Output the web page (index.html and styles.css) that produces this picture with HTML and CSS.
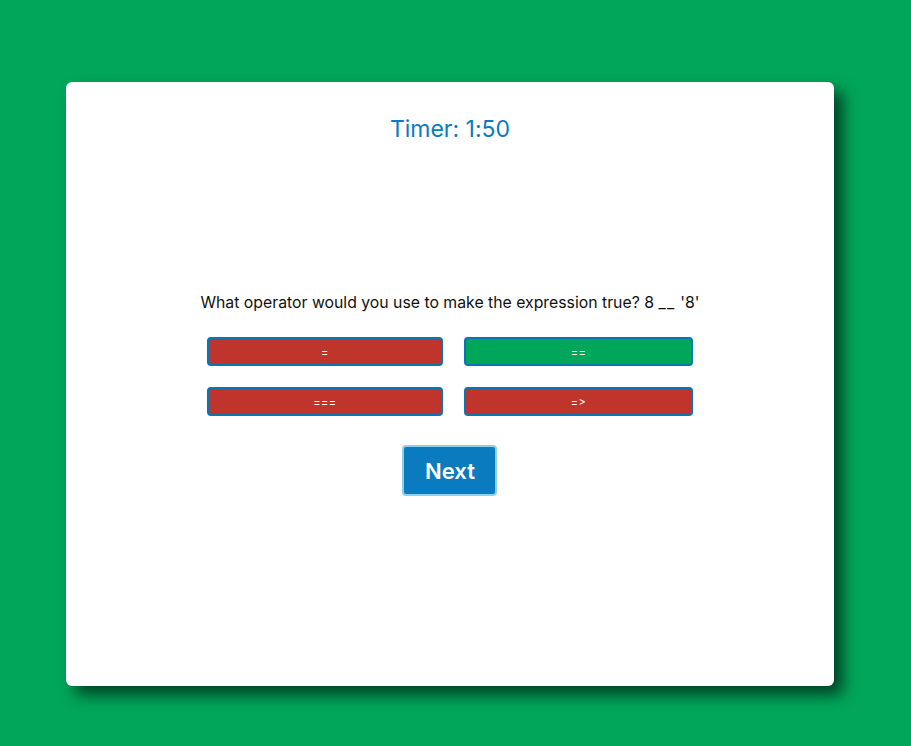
FILE: index.html
```html
<!DOCTYPE html>
<html>
<head>
<meta charset="utf-8">
<link rel="stylesheet" href="styles.css">
<title>Quiz</title>
</head>
<body>
<div class="card">
  <div class="timer">Timer: 1:50</div>
  <div class="quiz">
    <div class="question">What operator would you use to make the expression true? 8 <span class="blank">__</span> '8'</div>
    <div class="answers">
      <button class="btn wrong">=</button>
      <button class="btn right">==</button>
      <button class="btn wrong">===</button>
      <button class="btn wrong">=&gt;</button>
    </div>
    <button class="next">Next</button>
  </div>
</div>
</body>
</html>
```
FILE: styles.css
```css
html, body {
  margin: 0;
  padding: 0;
}
body {
  background: #00a65a;
  width: 911px;
  height: 746px;
  overflow: hidden;
  font-family: Inter, "Noto Sans", sans-serif;
  font-variant-ligatures: none;
  font-feature-settings: "calt" 0, "liga" 0;
}
.card {
  margin: 82px 0 0 66px;
  width: 768px;
  height: 604px;
  background: #fff;
  border-radius: 6px;
  box-shadow: 9px 9px 15px rgba(0, 0, 0, 0.6);
  box-sizing: border-box;
  padding-top: 34px;
  display: flex;
  flex-direction: column;
  align-items: center;
}
.timer {
  color: #0a7bbf;
  font-size: 23px;
  line-height: 26px;
}
.quiz {
  margin-top: 151px;
  display: flex;
  flex-direction: column;
  align-items: center;
}
.question {
  font-size: 15.8px;
  line-height: 20px;
  color: #111;
}
.blank {
  letter-spacing: 1.5px;
}
.answers {
  margin-top: 24px;
  display: grid;
  grid-template-columns: 236px 229px;
  column-gap: 21px;
  row-gap: 21px;
}
.btn {
  height: 29px;
  border: 2px solid #0a75b5;
  border-radius: 4px;
  color: #fff;
  font-family: inherit;
  font-feature-settings: "calt" 0, "liga" 0;
  font-size: 11px;
  letter-spacing: 0.5px;
  padding: 0;
}
.wrong { background: #c0352b; }
.right { background: #00a65a; }
.next {
  margin-top: 29px;
  width: 95px;
  height: 51px;
  background: #0a7bbf;
  border: 2px solid #8fd0ea;
  border-radius: 4px;
  color: #fff;
  font-family: inherit;
  font-size: 22px;
  font-weight: 600;
  padding: 0;
}
```
